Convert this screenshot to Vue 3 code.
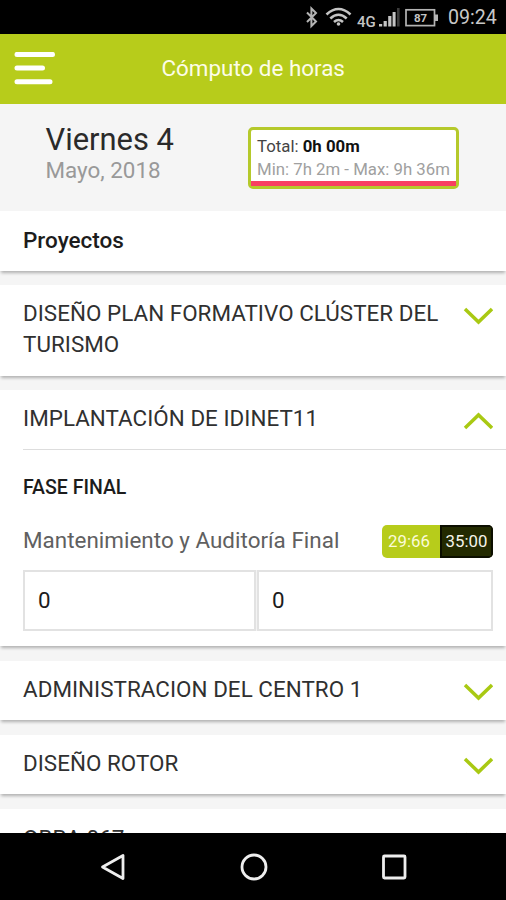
<script setup>
const before = [{ name: 'DISEÑO PLAN FORMATIVO CLÚSTER DEL TURISMO', key: 'plan' }]
const after = [
  { name: 'ADMINISTRACION DEL CENTRO 1', key: 'admin' },
  { name: 'DISEÑO ROTOR', key: 'rotor' },
  { name: 'OBRA 067', key: 'obra' },
]
</script>

<template>
  <div class="screen">
    <div class="status">
      <svg class="status-icons" width="150" height="34" viewBox="0 0 150 34" fill="none">
        <path d="M17 12.500l9 9-4.600 4.500V8.500L26 13l-9 9" stroke="#b4b4b4" stroke-width="2" />
        <g stroke="#c4c4c4" stroke-width="2.6">
          <path d="M36.500 14.500Q48.500 3.500 60.500 14.500" />
          <path d="M40.300 18.500Q48.500 11 56.700 18.500" />
          <path d="M44 22Q48.500 18 53 22" />
        </g>
        <circle cx="48.500" cy="24" r="1.800" fill="#c4c4c4" />
        <text x="67" y="27" class="net">4G</text>
        <path d="M89 24h3.200v2.500H89zM93.600 21h3.200v5.500h-3.200zM98.200 16h3.200v10.500h-3.200zM102.600 12h3v14.500h-3z" fill="#c4c4c4" />
        <path d="M107 8h2.600v18.500H107z" fill="#3c3c3c" />
        <rect x="116" y="9.800" width="28.500" height="15.800" stroke="#b4b4b4" stroke-width="1.700" />
        <path d="M145 14.500h3v6.500h-3z" fill="#b4b4b4" />
        <text x="130.500" y="21.800" text-anchor="middle" class="level">87</text>
      </svg>
      <span class="clock">09:24</span>
    </div>

    <header class="bar">
      <svg class="menu" width="42" height="34" viewBox="0 0 42 34" stroke="#fff" stroke-width="5" stroke-linecap="round">
        <path d="M3 2.400h35.500M3 16h25.500M3 29.800h33" />
      </svg>
      <h1>Cómputo de horas</h1>
    </header>

    <section class="day">
      <div class="date">
        <div class="weekday">Viernes 4</div>
        <div class="month">Mayo, 2018</div>
      </div>
      <div class="total">
        <div class="sum">Total: <b>0h 00m</b></div>
        <div class="range">Min: 7h 2m - Max: 9h 36m</div>
        <div class="progress"></div>
      </div>
    </section>

    <main class="list">
      <section class="card heading"><h2>Proyectos</h2></section>

      <section v-for="p in before" :key="p.key" class="card">
        <div class="row">
          <span class="name">{{ p.name }}</span>
          <svg class="chevron" width="30" height="18" viewBox="0 0 30 18"><path d="M2 2L15.500 15L29 2" /></svg>
        </div>
      </section>

      <section class="card">
        <div class="row open">
          <span class="name">IMPLANTACIÓN DE IDINET11</span>
          <svg class="chevron" width="30" height="18" viewBox="0 0 30 18"><path d="M2 16L15.500 3L29 16" /></svg>
        </div>
        <div class="phase">
          <h3>FASE FINAL</h3>
          <div class="task">
            <span class="task-name">Mantenimiento y Auditoría Final</span>
            <div class="badge"><span class="used">29:66</span><span class="limit">35:00</span></div>
          </div>
          <div class="fields">
            <div class="field">0</div>
            <div class="field">0</div>
          </div>
        </div>
      </section>

      <section v-for="p in after" :key="p.key" class="card">
        <div class="row">
          <span class="name">{{ p.name }}</span>
          <svg class="chevron" width="30" height="18" viewBox="0 0 30 18"><path d="M2 2L15.500 15L29 2" /></svg>
        </div>
      </section>
    </main>

    <nav class="nav">
      <svg width="28" height="30" viewBox="0 0 28 30"><path d="M3.500 15L24 3.500v23z" /></svg>
      <svg width="28" height="30" viewBox="0 0 28 30"><circle cx="14" cy="15" r="12" /></svg>
      <svg width="28" height="30" viewBox="0 0 28 30"><rect x="3.500" y="4" width="21.500" height="22" rx="1" /></svg>
    </nav>
  </div>
</template>

<style>
body {
  margin: 0;
  background: #000;
}
</style>

<style scoped>
.screen {
  width: 506px;
  height: 900px;
  overflow: hidden;
  display: flex;
  flex-direction: column;
  background: #f5f5f5;
  color: #1c1c1c;
  font-family: Roboto, "Liberation Sans", sans-serif;
  font-size: 22.4px;
}
h1, h2, h3 { margin: 0; }
.status {
  flex: none;
  height: 34px;
  background: #000;
  display: flex;
  justify-content: flex-end;
  padding-right: 10px;
}
.status-icons { margin-right: 8px; }
.net { font-size: 15px; font-weight: 500; fill: #c4c4c4; }
.level { font-size: 11.5px; font-weight: 700; fill: #c4c4c4; }
.clock {
  width: 48px;
  font-size: 19.6px;
  line-height: 36px;
  color: #c8c8c8;
  white-space: nowrap;
}
.bar {
  flex: none;
  height: 70px;
  background: #b7cc1b;
  display: grid;
  grid-template-columns: 147.500px 1fr;
  align-items: center;
  padding-left: 14px;
}
h1 {
  font-size: 22.4px;
  font-weight: 400;
  line-height: 30px;
  padding-bottom: 2px;
  color: #fdfde8;
}
.day {
  flex: none;
  height: 107px;
  display: flex;
  justify-content: space-between;
  align-items: flex-start;
  padding: 0 47px 0 45.500px;
  box-sizing: border-box;
}
.date { padding-top: 17px; }
.weekday {
  font-size: 30.900px;
  font-weight: 400;
  line-height: 37px;
  color: #2a2a2a;
}
.month {
  line-height: 25px;
  color: #999;
}
.total {
  box-sizing: border-box;
  width: 211px;
  height: 61.500px;
  margin-top: 23px;
  border: 3px solid #b5c92b;
  border-radius: 5px;
  background: #fff;
  display: flex;
  flex-direction: column;
  font-size: 16.8px;
  line-height: 23px;
  white-space: nowrap;
}
.sum { padding: 5px 0 0 6px; color: #444; }
.sum b { font-weight: 700; color: #111; }
.range { padding-left: 6px; color: #a0a0a0; }
.progress { height: 5px; background: #f83e62; }
.list {
  flex: 1;
  min-height: 0;
  overflow: hidden;
  display: flex;
  flex-direction: column;
  gap: 14.5px;
}
.card {
  flex: none;
  background: #fff;
  box-shadow: 0 3px 3px -1px rgba(0, 0, 0, 0.28);
}
.heading { height: 59.500px; }
h2 {
  padding: 14px 23px 0;
  font-size: 22.5px;
  font-weight: 500;
  line-height: 31px;
}
.row {
  display: flex;
  justify-content: space-between;
  align-items: flex-start;
  padding: 13px 13px 15.500px 23px;
}
.card:last-child .row { padding-top: 14px; }
.name {
  width: 425px;
  line-height: 31px;
  letter-spacing: 0.04px;
  color: #303030;
}
.chevron {
  margin-top: 9px;
  fill: none;
  stroke: #a9c913;
  stroke-width: 3.5;
  stroke-linecap: butt;
}
.open {
  margin-left: 23px;
  padding-left: 0;
  padding-bottom: 15px;
  border-bottom: 1px solid #ddd;
}
.phase { padding: 22px 13px 15px 23px; }
h3 {
  font-size: 19.5px;
  font-weight: 500;
  line-height: 31px;
}
.task {
  display: flex;
  justify-content: space-between;
  align-items: center;
  height: 33px;
  margin: 22px 0 12px;
}
.task-name {
  line-height: 30px;
  padding-bottom: 4px;
  letter-spacing: 0.03px;
  color: #606060;
}
.badge {
  display: flex;
  width: 111px;
  height: 33px;
  border-radius: 5px;
  overflow: hidden;
  font-size: 16.8px;
  line-height: 33px;
  text-align: center;
}
.used { width: 58px; padding-right: 4px; box-sizing: border-box; background: #b7cc1b; color: #fbfbd8; }
.limit {
  flex: 1;
  box-sizing: border-box;
  border: 2px solid #0c0e00;
  line-height: 29px;
  background: #232a00;
  color: #f4f4ea;
}
.fields {
  display: grid;
  grid-template-columns: 233px 1fr;
  gap: 1px;
  background: #f3f3f3;
}
.field {
  box-sizing: border-box;
  height: 61px;
  border: 2px solid #e2e2e2;
  background: #fff;
  padding-left: 13px;
  line-height: 56px;
}
.nav {
  flex: none;
  height: 67px;
  background: #000;
  display: flex;
  justify-content: space-between;
  align-items: center;
  padding: 0 98px 0 99px;
  box-sizing: border-box;
}
.nav svg {
  fill: none;
  stroke: #eee;
  stroke-width: 2.8;
  stroke-linejoin: round;
}
</style>
